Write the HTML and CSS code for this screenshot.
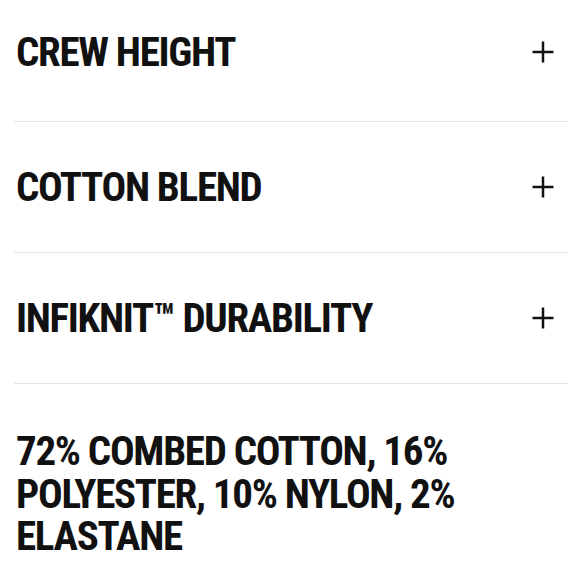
FILE: index.html
```html
<!DOCTYPE html>
<html lang="en">
<head>
<meta charset="utf-8">
<title>Product details</title>
<link rel="stylesheet" href="styles.css">
</head>
<body>
<div class="details">
  <div class="row row-first">
    <span class="title">CREW HEIGHT</span>
    <svg class="plus" viewBox="0 0 24 24" width="24" height="24" aria-hidden="true"><path d="M12 1.5v21M1.5 12h21"/></svg>
  </div>
  <div class="row">
    <span class="title">COTTON BLEND</span>
    <svg class="plus" viewBox="0 0 24 24" width="24" height="24" aria-hidden="true"><path d="M12 1.5v21M1.5 12h21"/></svg>
  </div>
  <div class="row">
    <span class="title">INFIKNIT™ DURABILITY</span>
    <svg class="plus" viewBox="0 0 24 24" width="24" height="24" aria-hidden="true"><path d="M12 1.5v21M1.5 12h21"/></svg>
  </div>
  <p class="material">72% COMBED COTTON, 16% POLYESTER, 10% NYLON, 2% ELASTANE</p>
</div>
</body>
</html>
```
FILE: styles.css
```css
html, body {
  margin: 0;
  padding: 0;
  background: #fff;
}
body {
  color: #111;
  font-family: "Roboto Condensed", "Liberation Sans", sans-serif;
  font-weight: 700;
}
.details {
  margin: 0 12px 0 14px;
}
.row {
  display: flex;
  align-items: center;
  justify-content: space-between;
  padding: 44px 0;
  border-bottom: 1px solid #e5e5e5;
}
.row-first {
  padding: 31px 0 48px;
}
.title {
  font-size: 41px;
  line-height: 42px;
  padding-left: 2px;
  letter-spacing: -1.3px;
}
.plus {
  display: block;
  margin-right: 13px;
  fill: none;
  stroke: #111;
  stroke-width: 2.5;
}
.material {
  margin: 0;
  padding: 46px 0 0 2px;
  font-size: 41px;
  line-height: 42.5px;
  letter-spacing: -1.3px;
}
```
